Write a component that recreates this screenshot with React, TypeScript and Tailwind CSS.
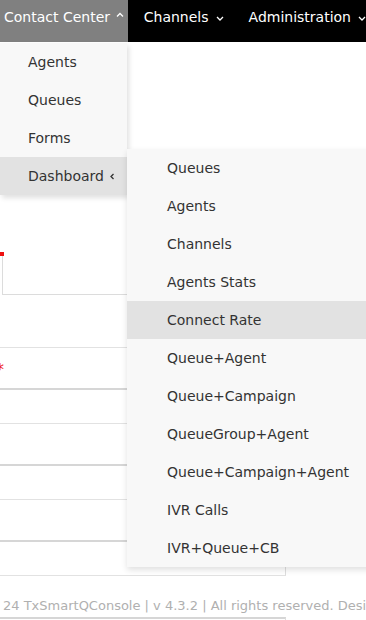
const contactItems = ["Agents", "Queues", "Forms"];

const dashboardItems = [
  "Queues",
  "Agents",
  "Channels",
  "Agents Stats",
  "Connect Rate",
  "Queue+Agent",
  "Queue+Campaign",
  "QueueGroup+Agent",
  "Queue+Campaign+Agent",
  "IVR Calls",
  "IVR+Queue+CB",
];

function Chevron({ dir, className }: { dir: "up" | "down" | "left"; className?: string }) {
  const d =
    dir === "up" ? "M1 4.5 L4 1.5 L7 4.5" : dir === "down" ? "M1 1 L4 4 L7 1" : "M3.5 1 L1 3.5 L3.5 6";
  const w = dir === "left" ? 5 : 8;
  const h = dir === "left" ? 7 : 5.5;
  return (
    <svg width={w} height={h} viewBox={`0 0 ${w} ${h}`} className={className}>
      <path d={d} fill="none" stroke="currentColor" strokeWidth="1.3" />
    </svg>
  );
}

export default function App() {
  return (
    <div className="relative h-[620px] w-[366px] overflow-hidden bg-white font-['DejaVu_Sans',sans-serif]">
      {/* top bar */}
      <nav className="flex h-[42px] bg-black text-[14px] leading-[21px] text-white whitespace-nowrap">
        <div className="flex w-[133px] items-start bg-[#808080] pl-[4px] pt-[7px]">
          <span>Contact Center</span>
          <Chevron dir="up" className="ml-[6px] mt-[5px]" />
        </div>
        <div className="flex items-start pl-[16px] pt-[7px]">
          <span>Channels</span>
          <Chevron dir="down" className="ml-[7px] mt-[9px]" />
        </div>
        <div className="flex items-start pl-[25px] pt-[7px]">
          <span>Administration</span>
          <Chevron dir="down" className="ml-[7px] mt-[9px]" />
        </div>
      </nav>

      {/* page behind the menus */}
      <main className="flex w-[286px] flex-col">
        <div className="h-[210px]" />
        <div className="ml-[2px] flex h-[43px] border-b border-l border-[#dcdcdc]">
          <div className="-ml-[3px] h-[4px] w-[4px] bg-[#e11]" />
        </div>
        <div className="h-[53px] border-b border-[#e2e2e2]" />
        <div className="flex h-[40px] items-center">
          <span className="-ml-[4px] mt-[4px] text-[16px] leading-none text-[#e22]">*</span>
        </div>
        <div className="h-[36px] border-t-2 border-r border-b border-t-[#d6d6d6] border-r-[#dedede] border-b-[#e2e2e2]" />
        <div className="h-[40px]" />
        <div className="h-[36px] border-t-2 border-r border-b border-t-[#d6d6d6] border-r-[#dedede] border-b-[#e2e2e2]" />
        <div className="h-[40px]" />
        <div className="h-[36px] border-t-2 border-r border-b border-t-[#d6d6d6] border-r-[#dedede] border-b-[#e2e2e2]" />
        <footer className="flex h-[41px] items-center pl-[3px] pt-[18px] text-[13px] whitespace-nowrap text-[#b0b0b0]">
          24 TxSmartQConsole | v 4.3.2 | All rights reserved. Designed by Tx
        </footer>
        <div className="h-[10px] border-t-2 border-r border-t-[#d6d6d6] border-r-[#dedede]" />
      </main>

      {/* Contact Center dropdown */}
      <ul className="absolute left-0 top-[43px] w-[127px] bg-[#f8f8f8] text-[14px] text-[#333] shadow-[2px_3px_5px_rgba(0,0,0,0.12)]">
        {contactItems.map((item) => (
          <li key={item} className="flex h-[38px] items-center pl-[28px]">
            {item}
          </li>
        ))}
        <li className="flex h-[38px] items-center bg-[#e2e2e2] pl-[28px]">
          <span>Dashboard</span>
          <Chevron dir="left" className="ml-[6px] mt-[1px]" />
        </li>
      </ul>

      {/* Dashboard submenu */}
      <ul className="absolute left-[127px] top-[149px] w-[260px] bg-[#f8f8f8] text-[14px] text-[#333] shadow-[0_3px_6px_rgba(0,0,0,0.12)]">
        {dashboardItems.map((item) => (
          <li
            key={item}
            className={
              item === "Connect Rate"
                ? "flex h-[38px] items-center bg-[#e2e2e2] pl-[40px] whitespace-nowrap"
                : "flex h-[38px] items-center pl-[40px] whitespace-nowrap"
            }
          >
            {item}
          </li>
        ))}
      </ul>
    </div>
  );
}
